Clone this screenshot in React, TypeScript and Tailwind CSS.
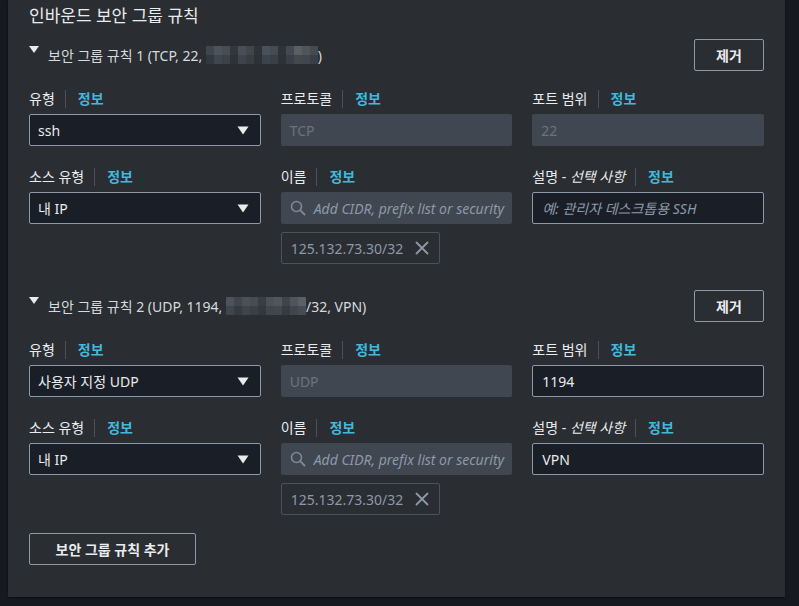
import React from 'react';

const FONT = '"Noto Sans", "Noto Sans CJK KR", sans-serif';

function Caret() {
  return (
    <svg width="12" height="9" viewBox="0 0 12 9" className="shrink-0">
      <path d="M0.5 0.5 L11.5 0.5 L6 8.5 Z" fill="#e9ebed" />
    </svg>
  );
}

function Label({ children }: { children: React.ReactNode }) {
  return (
    <div className="flex h-5 items-center text-[14px] leading-5 text-[#e9ebed]">
      <span>{children}</span>
      <span className="ml-[10px] mr-[12px] h-[18px] w-px bg-[#4b525b]" />
      <span className="font-bold text-[#42b8dd]">정보</span>
    </div>
  );
}

function Select({ value }: { value: string }) {
  return (
    <div className="flex h-8 items-center justify-between rounded-[2px] border border-[#8d99a8] bg-[#1a1f27] pl-[8px] pr-[11px] text-[14px] text-[#e9ebed]">
      <span>{value}</span>
      <Caret />
    </div>
  );
}

function Disabled({ value }: { value: string }) {
  return (
    <div className="flex h-8 items-center rounded-[2px] bg-[#414750] px-[9px] text-[14px] text-[#6c737d]">{value}</div>
  );
}

function TextInput({ value, placeholder }: { value?: string; placeholder?: string }) {
  return (
    <div className="flex h-8 items-center rounded-[2px] border border-[#8d99a8] bg-[#1a1f27] px-[9px] text-[14px]">
      {value ? (
        <span className="text-[#e9ebed]">{value}</span>
      ) : (
        <span className="italic text-[#8d99a8]">{placeholder}</span>
      )}
    </div>
  );
}

function SearchInput() {
  return (
    <div className="flex h-8 items-center whitespace-nowrap rounded-[2px] bg-[#414750] pl-[9px] text-[14px]">
      <svg width="16" height="16" viewBox="0 0 16 16" className="mr-[8px] shrink-0">
        <circle cx="6.5" cy="6.5" r="5" fill="none" stroke="#7d8998" strokeWidth="1.6" />
        <path d="M10.2 10.2 L14.5 14.5" stroke="#7d8998" strokeWidth="1.8" strokeLinecap="round" />
      </svg>
      <span className="italic text-[#8d99a8]">Add CIDR, prefix list or security</span>
    </div>
  );
}

function Token() {
  return (
    <div className="mt-[8px] flex h-8 w-[159px] items-center justify-between rounded-[2px] border border-[#4b525b] pl-[9px] pr-[10px] text-[14px] text-[#8d99a8]">
      <span>125.132.73.30/32</span>
      <svg width="14" height="14" viewBox="0 0 14 14">
        <path d="M1.5 1.5 L12.5 12.5 M12.5 1.5 L1.5 12.5" stroke="#8d99a8" strokeWidth="1.8" strokeLinecap="round" />
      </svg>
    </div>
  );
}

function Mosaic({ cells }: { cells: string[][] }) {
  const w = 8;
  const h = 9;
  return (
    <svg width={cells[0].length * w} height={cells.length * h} className="inline-block align-middle">
      {cells.map((row, r) =>
        row.map((c, i) => <rect key={`${r}-${i}`} x={i * w} y={r * h} width={w} height={h} fill={c} />)
      )}
    </svg>
  );
}

const blur1 = [
  ['#40464d', '#4c535b', '#474d55', '#33373d', '#494f57', '#40464d', '#2f3338', '#4a5058', '#454b53', '#2f3338', '#434950', '#5c5f62', '#4f555d', '#454b53'],
  ['#33383e', '#40464d', '#3c4148', '#2e3237', '#3e444b', '#383d44', '#2d3136', '#3d434a', '#3a3f46', '#2e3237', '#3a3f46', '#43484d', '#41474e', '#3a3f46'],
];

const blur2 = [
  ['#4d535b', '#40464d', '#4a5058', '#464c54', '#393e45', '#4b5159', '#50565e', '#3f454c', '#4f555d', '#5a6068'],
  ['#3f454c', '#363b41', '#3e444b', '#3a3f46', '#33383e', '#3f454c', '#41474e', '#363b41', '#40464d', '#464c54'],
];

function RuleHeader({ children }: { children: React.ReactNode }) {
  return (
    <div className="flex h-8 items-center justify-between">
      <div className="flex items-center text-[14px] text-[#d5dbdb]">
        <svg width="10" height="8" viewBox="0 0 10 8" className="mr-[9px] -mt-[11px]">
          <path d="M0 0 L10 0 L5 7 Z" fill="#e9ebed" />
        </svg>
        <span className="flex items-center">{children}</span>
      </div>
      <button className="h-8 w-[70px] rounded-[2px] border border-[#8d99a8] text-[14px] font-bold text-[#e9ebed]">제거</button>
    </div>
  );
}

function Field({ label, children }: { label: React.ReactNode; children: React.ReactNode }) {
  return (
    <div className="flex min-w-0 flex-col">
      <Label>{label}</Label>
      <div className="mt-[5px]">{children}</div>
    </div>
  );
}

const descLabel = (
  <>
    설명 - <span className="italic">선택 사항</span>
  </>
);

export default function App() {
  return (
    <div className="min-h-[606px] w-full bg-[#16191f]" style={{ fontFamily: FONT }}>
      <div className="ml-[8px] w-[777px] bg-[#2a2d32] px-[21px] pb-[32px] pt-[4px] shadow-[0_1px_2px_rgba(0,0,0,0.5)]">
        <h2 className="h-6 text-[17px] leading-6 text-[#e9ebed]">인바운드 보안 그룹 규칙</h2>

        <div className="mt-[11px]">
          <RuleHeader>
            보안 그룹 규칙 1 (TCP, 22,&nbsp;<Mosaic cells={blur1} />)
          </RuleHeader>
          <div className="mt-[18px] grid grid-cols-3 gap-x-[20px]">
            <Field label="유형"><Select value="ssh" /></Field>
            <Field label="프로토콜"><Disabled value="TCP" /></Field>
            <Field label="포트 범위"><Disabled value="22" /></Field>
          </div>
          <div className="mt-[21px] grid grid-cols-3 items-start gap-x-[20px]">
            <Field label="소스 유형"><Select value="내 IP" /></Field>
            <Field label="이름">
              <SearchInput />
              <Token />
            </Field>
            <Field label={descLabel}><TextInput placeholder="예: 관리자 데스크톱용 SSH" /></Field>
          </div>
        </div>

        <div className="mt-[26px]">
          <RuleHeader>
            보안 그룹 규칙 2 (UDP, 1194,&nbsp;<Mosaic cells={blur2} />/32, VPN)
          </RuleHeader>
          <div className="mt-[18px] grid grid-cols-3 gap-x-[20px]">
            <Field label="유형"><Select value="사용자 지정 UDP" /></Field>
            <Field label="프로토콜"><Disabled value="UDP" /></Field>
            <Field label="포트 범위"><TextInput value="1194" /></Field>
          </div>
          <div className="mt-[21px] grid grid-cols-3 items-start gap-x-[20px]">
            <Field label="소스 유형"><Select value="내 IP" /></Field>
            <Field label="이름">
              <SearchInput />
              <Token />
            </Field>
            <Field label={descLabel}><TextInput value="VPN" /></Field>
          </div>
        </div>

        <button className="mt-[18px] h-8 w-[167px] rounded-[2px] border border-[#8d99a8] text-[14px] font-bold text-[#e9ebed]">
          보안 그룹 규칙 추가
        </button>
      </div>
    </div>
  );
}
